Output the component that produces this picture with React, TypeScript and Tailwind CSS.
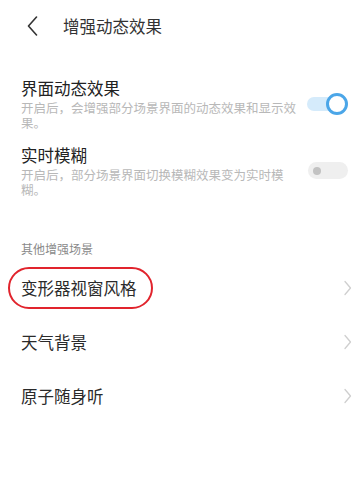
const font = "font-['Noto_Sans_CJK_SC','Noto_Sans',sans-serif]"

const Chevron = () => (
    <svg width="8" height="16" viewBox="0 0 8 16" className="shrink-0">
        <path d="M1 1.5 L6.5 8 L1 14.5" fill="none" stroke="#cfcfcf" strokeWidth="1.3" strokeLinecap="round" strokeLinejoin="round" />
    </svg>
)

const ToggleOn = () => (
    <div className="relative w-[41px] h-[22px] shrink-0">
        <div className="absolute left-0 top-[4px] w-[38px] h-[14px] rounded-full bg-[#d5ebfb]"></div>
        <div className="absolute right-0 top-0 w-[22px] h-[22px] rounded-full bg-white border-[3px] border-[#4ba6e8]"></div>
    </div>
)

const ToggleOff = () => (
    <div className="w-[40px] h-[17px] rounded-full bg-[#efefef] flex items-center pl-[5px] shrink-0">
        <div className="w-[8px] h-[8px] rounded-full bg-[#c2c2c2]"></div>
    </div>
)

const LinkRow = ({ label, circled }: { label: string; circled?: boolean }) => (
    <div className="relative h-[54px] flex items-center justify-between pl-[21px] pr-[9px]">
        <span className="text-[16.5px] text-[#2a2a2a]">{label}</span>
        <Chevron />
        {circled && (
            <div className="absolute left-[8px] top-[6px] w-[145px] h-[42px] rounded-[22px] border-2 border-[#e1242d]"></div>
        )}
    </div>
)

export default function App() {
    return (
        <div className={`w-[361px] h-[488px] bg-white overflow-hidden ${font}`}>
            <div className="h-[52px] flex items-center pl-[27px]">
                <svg width="11" height="20" viewBox="0 0 11 20">
                    <path d="M9.5 1 L1.5 10 L9.5 19" fill="none" stroke="#333" strokeWidth="1.6" strokeLinecap="round" strokeLinejoin="round" />
                </svg>
                <span className="ml-[25px] text-[16.5px] text-[#333]">增强动态效果</span>
            </div>

            <div className="pt-[25px] pl-[21px] pr-[13px]">
                <div className="flex items-center justify-between">
                    <div>
                        <div className="text-[16.5px] leading-[22px] text-[#222]">界面动态效果</div>
                        <div className="mt-[1px] text-[12.5px] leading-[15px] text-[#b8b8b8]">
                            开启后，会增强部分场景界面的动态效果和显示效<br />果。
                        </div>
                    </div>
                    <ToggleOn />
                </div>

                <div className="mt-[14px] flex items-center justify-between">
                    <div>
                        <div className="text-[16.5px] leading-[22px] text-[#222]">实时模糊</div>
                        <div className="mt-[1px] text-[12.5px] leading-[15px] text-[#b8b8b8]">
                            开启后，部分场景界面切换模糊效果变为实时模<br />糊。
                        </div>
                    </div>
                    <ToggleOff />
                </div>
            </div>

            <div className="mt-[44px] pl-[21px] text-[12px] leading-[16px] text-[#8a8a8a]">其他增强场景</div>

            <div className="mt-[4px]">
                <LinkRow label="变形器视窗风格" circled />
                <LinkRow label="天气背景" />
                <LinkRow label="原子随身听" />
            </div>
        </div>
    )
}
